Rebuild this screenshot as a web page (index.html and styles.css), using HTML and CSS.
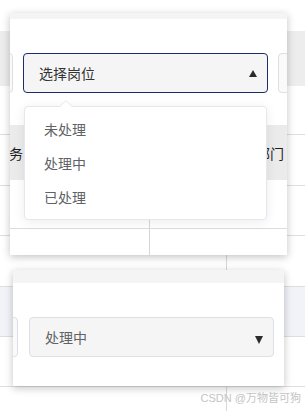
FILE: index.html
```html
<!DOCTYPE html>
<html lang="zh">
<head>
<meta charset="utf-8">
<title>选择岗位</title>
<link rel="stylesheet" href="styles.css">
</head>
<body>
<div class="page">
  <div class="bg-row r-top"></div>
  <div class="bg-row r-head"></div>
  <div class="bg-row r-a line"></div>
  <div class="bg-row r-b line"></div>
  <div class="bg-row r-c line split"><div class="cell"></div><div class="cell"></div></div>
  <div class="bg-row r-d line split"><div class="cell"></div><div class="cell"></div></div>
  <div class="bg-row r-e line split tint"><div class="cell"></div><div class="cell"></div></div>
  <div class="bg-row r-f line split"><div class="cell"></div><div class="cell"></div></div>
  <div class="bg-row r-g split"><div class="cell"></div><div class="cell"></div></div>
</div>

<div class="panel p1">
  <div class="strip strip-s"></div>
  <div class="fields f1">
    <div class="box ghost first"></div>
    <div class="select active"><span class="val dark">选择岗位</span><span class="tri up"></span></div>
    <div class="box ghost"></div>
  </div>
  <div class="tbl-head"><span class="th th-l">联务</span><span class="th th-r">部门</span></div>
  <div class="tbl-row line"><div class="cell"></div><div class="cell"></div></div>
  <div class="tbl-row"><div class="cell"></div><div class="cell"></div></div>

  <div class="dropdown">
    <span class="caret"></span>
    <ul class="options">
      <li class="option">未处理</li>
      <li class="option">处理中</li>
      <li class="option">已处理</li>
    </ul>
  </div>
</div>

<div class="panel p2">
  <div class="strip strip-l"></div>
  <div class="fields f2">
    <div class="box ghost first"></div>
    <div class="select"><span class="val">处理中</span><span class="tri down"></span></div>
    <div class="box ghost"></div>
  </div>
</div>

<div class="watermark">CSDN @万物皆可狗</div>
</body>
</html>
```

FILE: styles.css
```css
* { box-sizing: border-box; }

html, body {
  margin: 0;
  padding: 0;
  width: 305px;
  height: 411px;
  overflow: hidden;
  background: #ffffff;
  font-family: "Noto Sans CJK SC", "Liberation Sans", sans-serif;
}

/* ---------- background page table ---------- */
.page {
  display: flex;
  flex-direction: column;
}
.bg-row { flex: none; }
.bg-row.line { border-bottom: 1px solid #dedede; }
.r-top { height: 31px; }
.r-head { height: 55px; background: #ededed; }
.r-a { height: 49px; }
.r-b { height: 51px; }
.r-c { height: 50px; }
.r-d { height: 51px; }
.r-e { height: 50px; }
.r-f { height: 50px; }
.r-g { height: 30px; }
.tint { background: #f1f3f9; }
.split {
  display: grid;
  grid-template-columns: 227px 1fr;
}
.split .cell:first-child { border-right: 1px solid #d8d8d8; }

/* ---------- panels ---------- */
.panel {
  position: absolute;
  background: #ffffff;
  box-shadow: 0 2px 8px rgba(0, 0, 0, 0.24);
  overflow: hidden;
}
.p1 { left: 10px; top: 13px; width: 277px; height: 242px; }
.p2 { left: 13px; top: 270px; width: 271px; height: 116px; }

.strip { background: #f4f4f4; }
.strip-s { height: 6px; }
.strip-l { height: 13px; }

.fields {
  display: flex;
  gap: 10px;
  height: 40px;
  margin-top: 34px;
}
.f1 .first { margin-left: -242px; }
.f2 { gap: 11px; }
.f2 .first { margin-left: -240px; }

.box, .select {
  flex: none;
  width: 245px;
  height: 40px;
  border-radius: 4px;
}
.ghost {
  border: 1px solid #dcdfe6;
  background: #fafafa;
}
.select {
  display: flex;
  align-items: center;
  justify-content: space-between;
  padding: 0 10px 0 15px;
  border: 1px solid #dcdfe6;
  background: #f5f5f5;
}
.select.active { border-color: #1d2c6c; }
.val {
  font-size: 14px;
  color: #606266;
  line-height: 20px;
}
.val.dark { color: #333333; }

.tri {
  width: 0;
  height: 0;
  border-left: 4.5px solid transparent;
  border-right: 4.5px solid transparent;
}
.tri.up { border-bottom: 7px solid #2b2b2b; }
.tri.down { border-top: 8px solid #2b2b2b; margin-top: 6px; }

/* ---------- table inside panel 1 ---------- */
.tbl-head {
  position: relative;
  height: 55px;
  margin-top: 32px;
  background: #ebebeb;
  display: flex;
  align-items: center;
  justify-content: space-between;
}
.th {
  font-size: 14px;
  color: #1e1e1e;
  line-height: 20px;
  white-space: nowrap;
}
.th-l { margin-left: -15px; }
.th-r { margin-right: 3px; }

.tbl-row {
  display: grid;
  grid-template-columns: 140px 1fr;
  height: 49px;
}
.tbl-row.line { border-bottom: 1px solid #dcdcdc; }
.tbl-row .cell:first-child { border-right: 1px solid #d6d6d6; }

/* ---------- dropdown ---------- */
.dropdown {
  position: absolute;
  left: 14px;
  top: 93px;
  width: 243px;
  height: 114px;
  background: #ffffff;
  border: 1px solid #e4e7ed;
  border-radius: 4px;
  box-shadow: 0 2px 12px rgba(0, 0, 0, 0.08);
}
.caret {
  position: absolute;
  left: 34px;
  top: -7px;
  width: 0;
  height: 0;
  border-left: 7px solid transparent;
  border-right: 7px solid transparent;
  border-bottom: 7px solid #e4e7ed;
}
.caret::after {
  content: "";
  position: absolute;
  left: -6px;
  top: 1px;
  width: 0;
  height: 0;
  border-left: 6px solid transparent;
  border-right: 6px solid transparent;
  border-bottom: 6px solid #ffffff;
}
.options {
  list-style: none;
  margin: 0;
  padding: 5px 0;
}
.option {
  height: 34px;
  line-height: 34px;
  padding: 0 19px;
  font-size: 14px;
  color: #606266;
}

/* ---------- watermark ---------- */
.watermark {
  position: absolute;
  right: 4px;
  top: 390px;
  font-family: "Liberation Sans", "Noto Sans CJK SC", sans-serif;
  font-size: 11px;
  line-height: 16px;
  color: #c4c4c4;
  white-space: nowrap;
}
```
